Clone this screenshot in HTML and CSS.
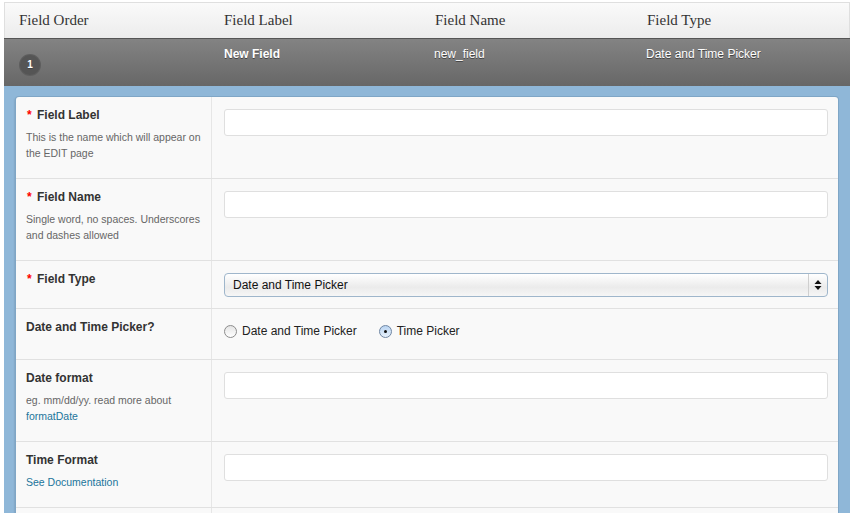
FILE: index.html
```html
<!DOCTYPE html>
<html>

<head>
    <title>Fields</title>
    <link rel="stylesheet" href="styles.css">
</head>

<body>
    <div class="fields">
        <div class="fields-head">
            <div>Field Order</div>
            <div>Field Label</div>
            <div>Field Name</div>
            <div>Field Type</div>
        </div>

        <div class="field-meta">
            <div class="order"><span class="badge">1</span></div>
            <div class="meta-label">New Field</div>
            <div>new_field</div>
            <div>Date and Time Picker</div>
        </div>

        <div class="field-form">
            <div class="form-panel">
                <div class="form-row">
                    <div class="form-label">
                        <label><span class="req">*</span> Field Label</label>
                        <p>This is the name which will appear on the EDIT page</p>
                    </div>
                    <div class="form-input"><input type="text"></div>
                </div>
                <div class="form-row">
                    <div class="form-label">
                        <label><span class="req">*</span> Field Name</label>
                        <p>Single word, no spaces. Underscores and dashes allowed</p>
                    </div>
                    <div class="form-input"><input type="text"></div>
                </div>
                <div class="form-row">
                    <div class="form-label">
                        <label><span class="req">*</span> Field Type</label>
                    </div>
                    <div class="form-input">
                        <div class="select-box">
                            <span class="select-text">Date and Time Picker</span>
                            <span class="select-arrows">
                                <svg width="8" height="12" viewBox="0 0 8 12">
                                    <path d="M4 1 L7.5 5 H0.5 Z" fill="#111" />
                                    <path d="M4 11 L7.5 7 H0.5 Z" fill="#111" />
                                </svg>
                            </span>
                        </div>
                    </div>
                </div>
                <div class="form-row">
                    <div class="form-label">
                        <label>Date and Time Picker?</label>
                    </div>
                    <div class="form-input">
                        <ul class="radio-list">
                            <li><span class="radio"></span>Date and Time Picker</li>
                            <li><span class="radio checked"></span>Time Picker</li>
                        </ul>
                    </div>
                </div>
                <div class="form-row">
                    <div class="form-label">
                        <label>Date format</label>
                        <p>eg. mm/dd/yy. read more about <a href="#">formatDate</a></p>
                    </div>
                    <div class="form-input"><input type="text"></div>
                </div>
                <div class="form-row">
                    <div class="form-label">
                        <label>Time Format</label>
                        <p><a href="#">See Documentation</a></p>
                    </div>
                    <div class="form-input"><input type="text"></div>
                </div>
                <div class="form-row">
                    <div class="form-label"></div>
                    <div class="form-input"><input type="text"></div>
                </div>
            </div>
        </div>
    </div>
</body>

</html>
```

FILE: styles.css
```css
body {
    margin: 0;
    padding: 2px 4px 0;
    font-family: "Liberation Sans", Arial, sans-serif;
    font-size: 12px;
    color: #333;
    background: #fff;
    overflow: hidden;
}

.fields-head,
.field-meta {
    display: grid;
    grid-template-columns: 205px 211px 212px 1fr;
}

.fields-head {
    height: 35px;
    border: 1px solid #dfdfdf;
    border-bottom: none;
    background: linear-gradient(#fafafa, #ececec);
    font-family: "Liberation Serif", Georgia, serif;
    font-size: 15px;
    line-height: 35px;
    color: #333;
}

.fields-head div {
    padding-left: 14px;
}

.field-meta {
    height: 47px;
    border-top: 1px solid #555;
    background: linear-gradient(#838383, #676767);
    color: #fff;
    font-size: 12px;
    line-height: 16px;
    text-shadow: 0 1px 0 #444;
}

.field-meta div {
    padding: 7px 0 0 14px;
}

.field-meta .meta-label {
    padding-left: 15px;
    font-weight: bold;
}

.field-meta .order {
    padding-top: 16px;
    padding-left: 16px;
}

.badge {
    display: inline-block;
    width: 20px;
    height: 20px;
    border-radius: 50%;
    background: #555;
    box-shadow: 0 0 0 1px #5e5e5e;
    color: #fff;
    font-size: 10px;
    font-weight: bold;
    line-height: 20px;
    text-align: center;
}

.field-form {
    background: #8fb7d8;
    padding: 11px 12px 0;
}

.form-panel {
    background: #f9f9f9;
    border-radius: 3px 3px 0 0;
    box-shadow: 0 0 0 1px #7fa6c6, -1px 1px 2px rgba(0, 0, 0, 0.25);
}

.form-row {
    display: flex;
    border-top: 1px solid #e1e1e1;
}

.form-row:first-child {
    border-top: none;
}

.form-label {
    width: 176px;
    flex-shrink: 0;
    padding: 10px 9px 17px 10px;
    border-right: 1px solid #e6e6e6;
}

.form-label label {
    display: block;
    font-size: 12px;
    font-weight: bold;
    line-height: 16px;
    color: #333;
}

.req {
    color: #f00;
    margin: 0 2px 0 1px;
}

.form-label p {
    margin: 6px 0 0;
    font-size: 10.5px;
    line-height: 16px;
    color: #666;
}

a {
    color: #21759b;
    text-decoration: none;
}

.form-input {
    flex: 1;
    padding: 12px 10px 11px 12px;
}

.form-input input {
    display: block;
    box-sizing: border-box;
    width: 100%;
    height: 27px;
    margin: 0;
    border: 1px solid #dfdfdf;
    border-radius: 3px;
    background: #fff;
}

.select-box {
    display: flex;
    height: 24px;
    box-sizing: border-box;
    border: 1px solid #9fb6cb;
    border-radius: 4px;
    background: linear-gradient(#ffffff, #ebebeb 60%, #f6f6f6);
    color: #111;
    font-size: 12px;
    line-height: 22px;
}

.select-text {
    flex: 1;
    padding-left: 8px;
}

.select-arrows {
    width: 18px;
    border-left: 1px solid #cfcfcf;
    display: flex;
    align-items: center;
    justify-content: center;
}

.radio-list {
    display: flex;
    gap: 22px;
    list-style: none;
    margin: 0;
    padding: 1px 0 8px;
    font-size: 12px;
    line-height: 18px;
    color: #222;
}

.radio-list li {
    display: flex;
    align-items: center;
}

.radio {
    display: inline-block;
    width: 11px;
    height: 11px;
    margin-right: 5px;
    border: 1px solid #8c8c8c;
    border-radius: 50%;
    background: linear-gradient(#e4e4e4, #ffffff);
    position: relative;
}

.radio.checked {
    border-color: #6f86a3;
    background: linear-gradient(#b9d4f2, #e8f1fb);
}

.radio.checked::after {
    content: "";
    position: absolute;
    left: 4px;
    top: 4px;
    width: 3px;
    height: 3px;
    border-radius: 50%;
    background: #111;
}
```
